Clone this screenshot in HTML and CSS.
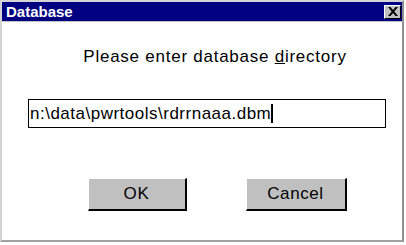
FILE: index.html
```html
<!DOCTYPE html>
<html>
<head>
<meta charset="utf-8">
<link rel="stylesheet" href="styles.css">
</head>
<body>
<div class="window">
  <div class="titlebar">
    <span class="title">Database</span>
    <span class="close">
      <svg width="10" height="9" viewBox="0 0 10 9"><path d="M0 0h2.5l2.5 3 2.5-3h2.5l-3.7 4.5 3.7 4.5h-2.5l-2.5-3-2.5 3h-2.5l3.7-4.5z" fill="#000"/></svg>
    </span>
  </div>
  <div class="content">
    <div class="prompt">Please enter database <u>d</u>irectory</div>
    <div class="field"><span class="value">n:\data\pwrtools\rdrrnaaa.dbm</span><span class="caret"></span></div>
    <div class="buttons">
      <div class="btn ok">OK</div>
      <div class="btn cancel">Cancel</div>
    </div>
  </div>
</div>
</body>
</html>
```
FILE: styles.css
```css
html, body {
  margin: 0;
  padding: 0;
  background: #ffffff;
}
body {
  width: 406px;
  height: 245px;
  font-family: "Liberation Sans", Arial, sans-serif;
}
.window {
  box-sizing: border-box;
  width: 404px;
  height: 242px;
  border-left: 2px solid #d4d4d4;
  border-top: 2px solid #d4d4d4;
  border-right: 2px solid #909090;
  border-bottom: 2px solid #a0a0a0;
  background: #ffffff;
  display: flex;
  flex-direction: column;
}
.titlebar {
  height: 19px;
  background: #000080;
  display: flex;
  align-items: center;
  justify-content: space-between;
  padding: 0 1px 0 4px;
  border-bottom: 1px solid #c0c0c0;
}
.title {
  color: #ffffff;
  font-weight: bold;
  font-size: 15px;
  letter-spacing: 0;
}
.close {
  box-sizing: border-box;
  width: 17px;
  height: 14px;
  background: #c0c0c0;
  border-top: 1px solid #ffffff;
  border-left: 1px solid #ffffff;
  border-right: 1px solid #000000;
  border-bottom: 1px solid #000000;
  display: flex;
  align-items: center;
  justify-content: center;
}
.content {
  flex: 1;
  display: flex;
  flex-direction: column;
  align-items: center;
}
.prompt {
  margin-top: 25px;
  margin-left: 26px;
  font-size: 17px;
  letter-spacing: 0.75px;
  color: #000;
  line-height: 19px;
}
.field {
  box-sizing: border-box;
  align-self: flex-start;
  margin-left: 26px;
  margin-top: 33px;
  width: 358px;
  height: 29px;
  border: 1px solid #000;
  display: flex;
  align-items: center;
  padding-left: 1px;
  font-size: 17px;
  letter-spacing: 0.5px;
  color: #000;
}
.caret {
  display: inline-block;
  width: 2px;
  height: 19px;
  background: #000;
  margin-left: 0;
}
.buttons {
  margin-top: 50px;
  display: flex;
  gap: 59px;
  margin-left: 30px;
}
.btn {
  box-sizing: border-box;
  height: 33px;
  background: #c0c0c0;
  border-top: 1px solid #ffffff;
  border-left: 1px solid #ffffff;
  border-right: 2px solid #000000;
  border-bottom: 2px solid #000000;
  display: flex;
  align-items: center;
  justify-content: center;
  font-size: 17px;
  letter-spacing: 0.6px;
  color: #000;
}
.ok { width: 99px; }
.cancel { width: 101px; }
```
